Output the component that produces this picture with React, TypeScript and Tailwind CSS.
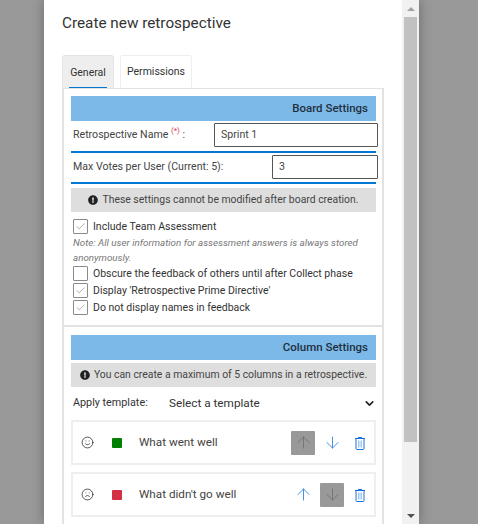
import { ArrowDown, ArrowUp, Check, ChevronDown, Frown, Smile } from "lucide-react";
import { FaExclamationCircle } from "react-icons/fa";

const CheckRow = ({ label, checked }: { label: string; checked: boolean }) => (
  <div className="flex items-center h-[17px]">
    <div className="w-[15px] h-[15px] shrink-0 border border-[#8a8a8a] rounded-[1px] flex items-center justify-center bg-white mr-[5px]">
      {checked && <Check size={11} strokeWidth={1} className="text-[#555]" />}
    </div>
    <span className="text-[10.5px] text-[#333] whitespace-nowrap">{label}</span>
  </div>
);

const Notice = ({ text }: { text: string }) => (
  <div className="h-6 bg-[#dedede] flex items-center justify-center text-[10.4px] text-[#444] whitespace-nowrap">
    <FaExclamationCircle size={10} className="shrink-0 text-[#222] mr-[4px]" />
    {text}
  </div>
);

const TrashIcon = () => (
  <svg width="12" height="14" viewBox="0 0 12 14" fill="none" className="text-[#1a73d8]">
    <path d="M4 1.5h4M1 2.5h10" stroke="currentColor" strokeWidth="1" />
    <path d="M2 2.5v10a1 1 0 0 0 1 1h6a1 1 0 0 0 1-1v-10" stroke="currentColor" strokeWidth="1" />
    <path d="M4.5 4.5v7M6 4.5v7M7.5 4.5v7" stroke="#9fc4ee" strokeWidth="1" />
  </svg>
);

const ColumnRow = ({ face, color, title, upOff }: { face: "smile" | "frown"; color: string; title: string; upOff: boolean }) => (
  <div className="h-[45px] border-2 border-[#eeeeee] flex items-center pl-[8px] pr-[2px]">
    {face === "smile" ? <Smile size={13} strokeWidth={1.4} className="text-[#222]" /> : <Frown size={13} strokeWidth={1.4} className="text-[#222]" />}
    <div className={`w-[10px] h-[10px] rounded-[1px] ml-[18px] ${color}`} />
    <span className="ml-[17px] text-[11.7px] text-[#444]">{title}</span>
    <div className="ml-auto flex items-center">
      <div className={`w-6 h-6 flex items-center justify-center rounded-[1px] ${upOff ? "bg-[#999999] text-[#707070]" : "text-[#2f7fe0]"}`}>
        <ArrowUp size={19} strokeWidth={1.1} />
      </div>
      <div className={`w-6 h-6 ml-[5px] flex items-center justify-center rounded-[1px] ${upOff ? "text-[#2f7fe0]" : "bg-[#999999] text-[#707070]"}`}>
        <ArrowDown size={19} strokeWidth={1.1} />
      </div>
      <div className="w-6 h-6 ml-[4px] flex items-center justify-center">
        <TrashIcon />
      </div>
    </div>
  </div>
);

export default function App() {
  return (
    <div className="w-[478px] h-[524px] bg-[#999999] flex justify-start overflow-hidden font-['Roboto',sans-serif]">
      <div className="ml-[44px] w-[375px] h-full bg-white flex shadow-[0_0_12px_rgba(0,0,0,0.3)]">
        <div className="w-[358px] h-full overflow-hidden pl-[18px]">
          <h1 className="text-[15.3px] text-[#333] pt-[13px] leading-5">Create new retrospective</h1>
          <div className="flex mt-[22px] text-[10.5px] text-[#333]">
            <div className="w-[52px] h-[33px] bg-[#eeeeee] border border-[#e4e4e4] border-b-0 rounded-t-[3px] flex flex-col items-center justify-end">
              <span className="w-[38px] h-[23px] text-center border-b border-[#0078d4]">General</span>
            </div>
            <div className="w-[72px] h-[33px] ml-[6px] border border-[#eeeeee] border-b-0 rounded-t-[3px] flex items-center justify-center">Permissions</div>
          </div>
          <div className="w-[322px] border-2 border-b-0 border-[#e2e2e2] border-t-[1px] h-[500px]">
            <div className="pl-[7px] pr-[6px] pt-[7px]">
              <div className="h-[25px] bg-[#7cb9e8] flex items-center justify-end pr-2 text-[11.5px] font-medium text-[#1f2f40]">Board Settings</div>
              <div className="flex items-start h-[30px] text-[10.6px] text-[#444] pl-[2px] pt-[2px]">
                <span className="h-6 flex items-center">Retrospective Name&nbsp;<sup className="text-[#e04050] text-[8px]">(*)</sup>&nbsp;:</span>
                <div className="ml-auto -mr-[2px] w-[164px] h-6 border border-[#555] rounded-[1px] pl-[6px] flex items-center">Sprint 1</div>
              </div>
              <div className="h-[2px] bg-[#0078d4]" />
              <div className="flex items-start h-[29px] text-[10.6px] text-[#444] pl-[2px] pt-[2px]">
                <span className="h-6 flex items-center">Max Votes per User (Current: 5):</span>
                <div className="ml-auto -mr-[2px] w-[106px] h-6 border border-[#555] rounded-[1px] pl-[6px] flex items-center">3</div>
              </div>
              <div className="h-[2px] bg-[#0078d4]" />
              <div className="mt-[4px]"><Notice text="These settings cannot be modified after board creation." /></div>
              <div className="mt-[6px] pl-[2px]">
                <CheckRow label="Include Team Assessment" checked />
                <p className="text-[9.8px] italic text-[#777] leading-[15px]">Note: All user information for assessment answers is always stored anonymously.</p>
                <CheckRow label="Obscure the feedback of others until after Collect phase" checked={false} />
                <CheckRow label="Display 'Retrospective Prime Directive'" checked />
                <CheckRow label="Do not display names in feedback" checked />
              </div>
            </div>
            <div className="h-[2px] bg-[#e2e2e2] mt-[9px]" />
            <div className="pl-[7px] pr-[6px] pt-[8px]">
              <div className="h-[25px] bg-[#7cb9e8] flex items-center justify-end pr-2 text-[11.5px] font-medium text-[#1f2f40]">Column Settings</div>
              <div className="mt-[3px]"><Notice text="You can create a maximum of 5 columns in a retrospective." /></div>
              <div className="flex items-center h-[33px] text-[10.8px] text-[#333] pl-[2px]">
                <span className="w-[96px]">Apply template:</span>
                <span className="text-[11.75px]">Select a template</span>
                <ChevronDown size={13} strokeWidth={3} className="ml-auto text-[#222]" />
              </div>
              <ColumnRow face="smile" color="bg-[#008000]" title="What went well" upOff />
              <div className="h-[7px]" />
              <ColumnRow face="frown" color="bg-[#d32f45]" title="What didn't go well" upOff={false} />
            </div>
          </div>
        </div>
        <div className="w-[17px] h-full bg-[#f1f1f1] flex flex-col items-center">
          <div className="w-0 h-0 mt-[7px] border-x-[4px] border-x-transparent border-b-[4px] border-b-[#a3a3a3]" />
          <div className="w-[13px] h-[425px] bg-[#c1c1c1] mt-[6px]" />
          <div className="w-0 h-0 mt-auto mb-[6px] border-x-[4px] border-x-transparent border-t-[4px] border-t-[#505050]" />
        </div>
      </div>
    </div>
  );
}
